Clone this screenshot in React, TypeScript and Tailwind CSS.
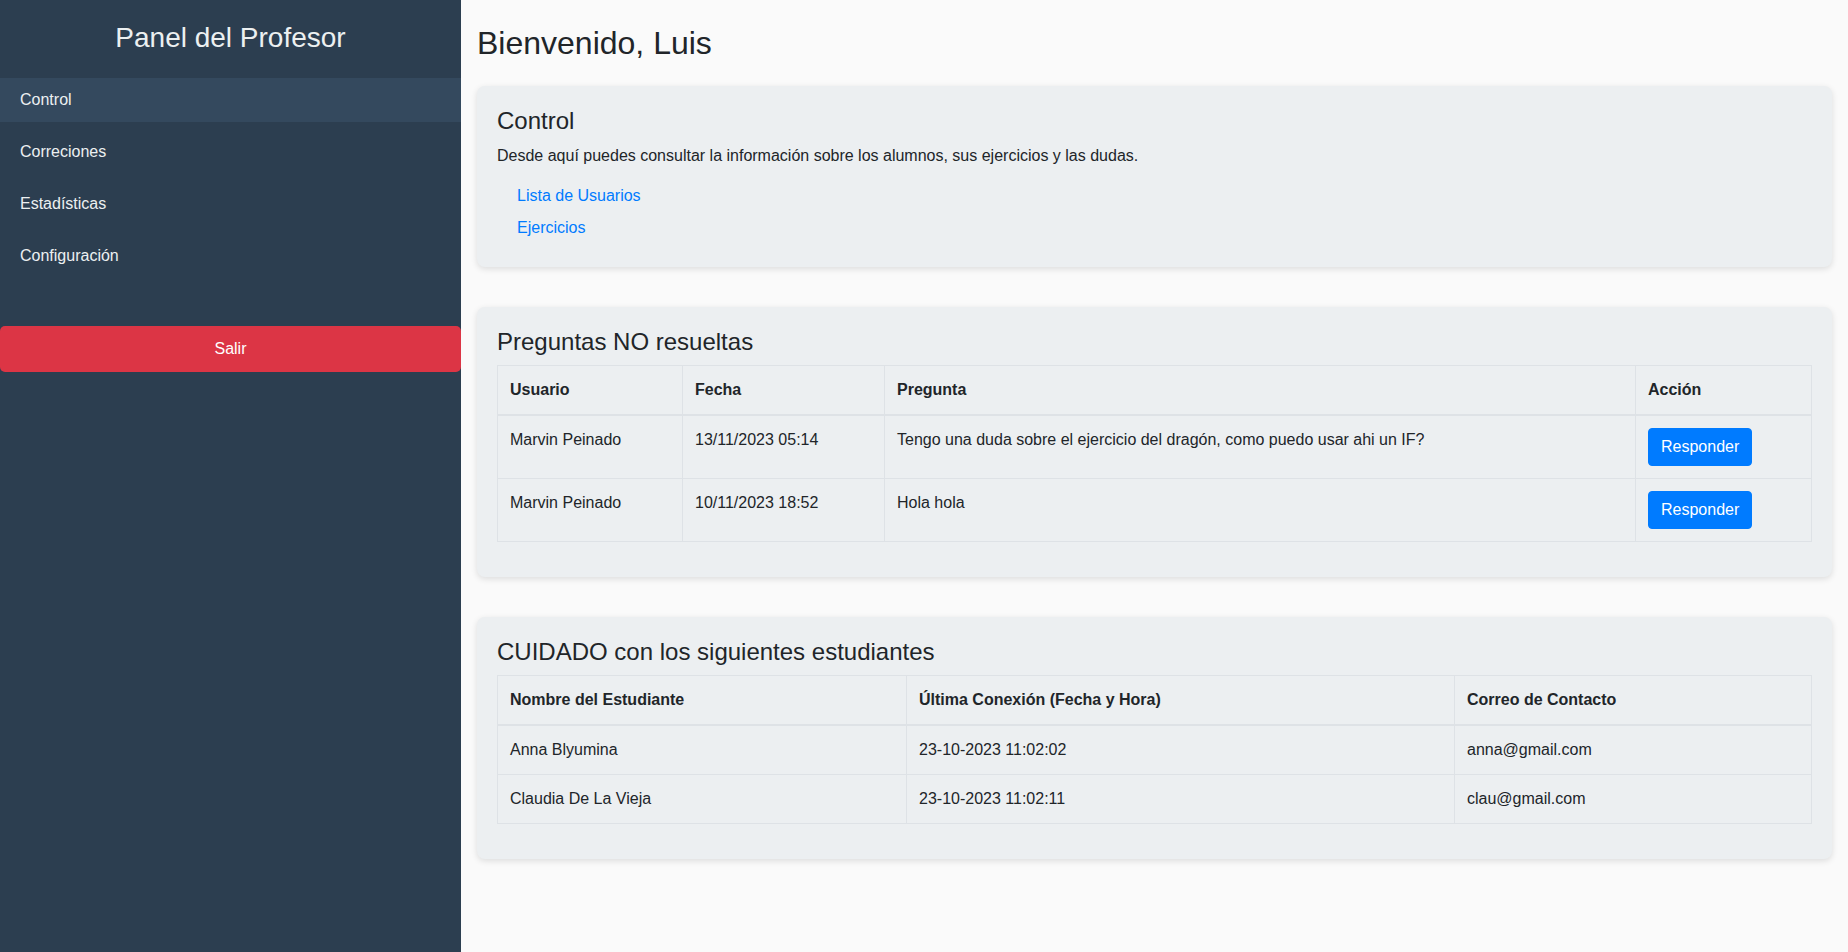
import React from 'react';

const NAV = ['Control', 'Correciones', 'Estadísticas', 'Configuración'];

const QUESTIONS = [
  { user: 'Marvin Peinado', date: '13/11/2023 05:14', text: 'Tengo una duda sobre el ejercicio del dragón, como puedo usar ahi un IF?' },
  { user: 'Marvin Peinado', date: '10/11/2023 18:52', text: 'Hola hola' },
];

const STUDENTS = [
  { name: 'Anna Blyumina', last: '23-10-2023 11:02:02', mail: 'anna@gmail.com' },
  { name: 'Claudia De La Vieja', last: '23-10-2023 11:02:11', mail: 'clau@gmail.com' },
];

const th = 'border border-[#dee2e6] border-b-2 px-3 py-3 text-left font-bold align-bottom';
const td = 'border border-[#dee2e6] px-3 py-3 align-top';

function Card({ children, className = '' }: { children: React.ReactNode; className?: string }) {
  return (
    <section className={`rounded-lg bg-[#eceff1] p-5 shadow-[0_2px_6px_rgba(0,0,0,0.12)] ${className}`}>
      {children}
    </section>
  );
}

export default function App() {
  return (
    <div className="flex min-h-screen text-[16px] leading-6 text-[#212529]" style={{ fontFamily: '"Liberation Sans", Arial, sans-serif' }}>
      <aside className="w-[461px] shrink-0 bg-[#2c3e50] pt-[21px]">
        <h3 className="mb-[23px] text-center text-[28px] leading-[34px] text-[#ecf0f1]">Panel del Profesor</h3>
        <nav className="flex flex-col">
          {NAV.map((item, i) => (
            <a
              key={item}
              href="#"
              className={`mb-2 flex h-[44px] items-center pl-5 text-[#ecf0f1] ${i === 0 ? 'bg-[#34495e]' : ''}`}
            >
              {item}
            </a>
          ))}
        </nav>
        <button type="button" className="mt-10 h-[46px] w-full rounded-[5px] bg-[#dc3545] text-white">
          Salir
        </button>
      </aside>

      <main className="flex-1 bg-[#fafafa] px-4 pt-6 pb-6">
        <h2 className="mb-6 text-[32px] leading-[38px]">Bienvenido, Luis</h2>

        <Card className="mb-10">
          <h4 className="mb-[9px] text-[24px] leading-[29px]">Control</h4>
          <p className="mb-4">Desde aquí puedes consultar la información sobre los alumnos, sus ejercicios y las dudas.</p>
          <ul className="pl-5">
            <li className="mb-2"><a href="#" className="text-[#007bff]">Lista de Usuarios</a></li>
            <li className="mb-[7px]"><a href="#" className="text-[#007bff]">Ejercicios</a></li>
          </ul>
        </Card>

        <Card className="mb-10">
          <h4 className="mb-[9px] text-[24px] leading-[29px]">Preguntas NO resueltas</h4>
          <table className="mb-[15px] w-full border-collapse">
            <thead>
              <tr>
                <th className={`${th} w-[185px]`}>Usuario</th>
                <th className={`${th} w-[202px]`}>Fecha</th>
                <th className={th}>Pregunta</th>
                <th className={`${th} w-[176px]`}>Acción</th>
              </tr>
            </thead>
            <tbody>
              {QUESTIONS.map((q) => (
                <tr key={q.date}>
                  <td className={td}>{q.user}</td>
                  <td className={td}>{q.date}</td>
                  <td className={td}>{q.text}</td>
                  <td className={td}>
                    <button type="button" className="h-[38px] rounded-[4px] border border-[#007bff] bg-[#007bff] px-3 text-white">
                      Responder
                    </button>
                  </td>
                </tr>
              ))}
            </tbody>
          </table>
        </Card>

        <Card>
          <h4 className="mb-[9px] text-[24px] leading-[29px]">CUIDADO con los siguientes estudiantes</h4>
          <table className="mb-[15px] w-full border-collapse">
            <thead>
              <tr>
                <th className={`${th} w-[409px]`}>Nombre del Estudiante</th>
                <th className={`${th} w-[548px]`}>Última Conexión (Fecha y Hora)</th>
                <th className={th}>Correo de Contacto</th>
              </tr>
            </thead>
            <tbody>
              {STUDENTS.map((s) => (
                <tr key={s.mail}>
                  <td className={td}>{s.name}</td>
                  <td className={td}>{s.last}</td>
                  <td className={td}>{s.mail}</td>
                </tr>
              ))}
            </tbody>
          </table>
        </Card>
      </main>
    </div>
  );
}
